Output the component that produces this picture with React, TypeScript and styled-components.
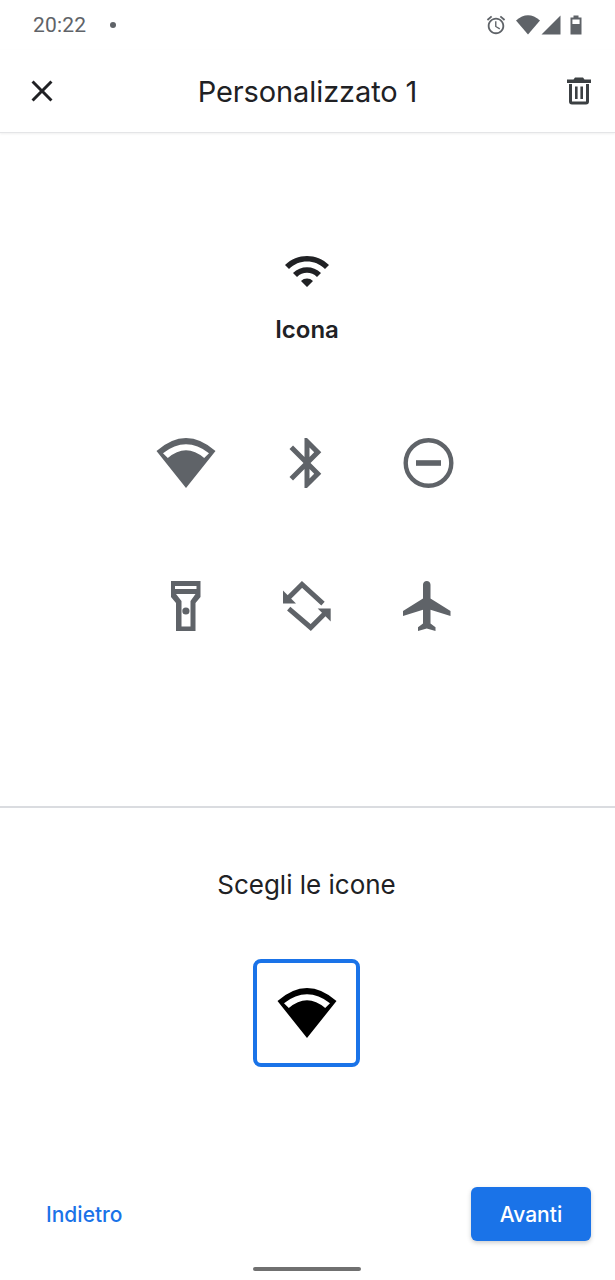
import styled, { createGlobalStyle } from "styled-components"

const GlobalStyle = createGlobalStyle`
  html, body {
    margin: 0;
    padding: 0;
    background: #ffffff;
  }
  * {
    box-sizing: border-box;
  }
`

const GRAY = "#5f6368"
const BLUE = "#1a73e8"

const Page = styled.div`
  width: 615px;
  height: 1280px;
  display: flex;
  flex-direction: column;
  overflow: hidden;
  background: #ffffff;
  font-family: Inter, "Noto Sans", sans-serif;
  color: #202124;
`

const StatusBar = styled.div`
  height: 50px;
  display: flex;
  align-items: center;
  padding: 0 33px;
  color: ${GRAY};
`

const Clock = styled.span`
  font-family: Roboto, sans-serif;
  font-size: 21px;
  letter-spacing: 0.2px;
`

const Dot = styled.span`
  width: 6px;
  height: 6px;
  margin-left: 24px;
  border-radius: 50%;
  background: ${GRAY};
`

const StatusIcons = styled.div`
  margin-left: auto;
  display: flex;
  align-items: center;
`

const StatusIcon = styled.span<{ $gap?: number }>`
  display: flex;
  margin-left: ${(p) => p.$gap ?? 0}px;
`

const Header = styled.header`
  height: 83px;
  flex-shrink: 0;
  display: flex;
  align-items: center;
  padding: 0 24px;
  border-bottom: 1px solid #e4e5e7;
  box-shadow: 0 1px 2px rgba(60, 64, 67, 0.08);
`

const HeaderSlot = styled.div<{ $end?: boolean }>`
  width: 36px;
  display: flex;
  justify-content: ${(p) => (p.$end ? "flex-end" : "flex-start")};
`

const Title = styled.h1`
  flex: 1;
  margin: 0;
  text-align: center;
  font-size: 29px;
  font-weight: 400;
  letter-spacing: -0.1px;
`

const Preview = styled.section`
  height: 675px;
  flex-shrink: 0;
  display: flex;
  flex-direction: column;
  align-items: center;
  padding: 114px 1px 0 0;
  border-bottom: 2px solid #dadce0;
`

const PreviewLabel = styled.div`
  margin-top: 21px;
  font-size: 24px;
  line-height: 28px;
  font-weight: 600;
`

const TileGrid = styled.div`
  margin-top: 89px;
  display: grid;
  grid-template-columns: repeat(3, 121px);
  row-gap: 83px;
`

const Tile = styled.div`
  height: 60px;
  display: flex;
  align-items: center;
  justify-content: center;
  color: ${GRAY};
`

const Picker = styled.section`
  flex: 1;
  display: flex;
  flex-direction: column;
  align-items: center;
  padding: 61px 2px 0 0;
`

const PickerTitle = styled.h2`
  margin: 0;
  font-size: 26px;
  line-height: 32px;
  font-weight: 400;
`

const SelectedIcon = styled.div`
  margin-top: 58px;
  width: 107px;
  height: 108px;
  display: flex;
  align-items: center;
  justify-content: center;
  border: 4px solid ${BLUE};
  border-radius: 8px;
  color: #000000;
`

const Footer = styled.footer`
  height: 54px;
  flex-shrink: 0;
  display: flex;
  align-items: center;
  justify-content: space-between;
  padding: 0 24px 0 46px;
`

const BackButton = styled.button`
  padding: 0;
  border: 0;
  background: none;
  font: inherit;
  font-size: 21px;
  font-weight: 500;
  color: ${BLUE};
`

const NextButton = styled.button`
  width: 120px;
  height: 54px;
  border: 0;
  border-radius: 6px;
  background: ${BLUE};
  box-shadow: 0 2px 4px rgba(60, 64, 67, 0.25);
  font: inherit;
  font-size: 21px;
  font-weight: 500;
  color: #ffffff;
`

const HomeArea = styled.div`
  height: 39px;
  flex-shrink: 0;
  display: flex;
  justify-content: center;
  padding: 26px 1px 0 0;
`

const HomeBar = styled.div`
  width: 108px;
  height: 4px;
  border-radius: 2px;
  background: #707070;
`

const WIFI_PATH =
  "M1 9l2 2c4.97-4.97 13.03-4.97 18 0l2-2C16.93 2.93 7.08 2.93 1 9zm8 8l3 3 3-3c-1.65-1.66-4.34-1.66-6 0zm-4-4l2 2c2.76-2.76 7.24-2.76 10 0l2-2C15.14 9.14 8.87 9.14 5 13z"

function WedgeWifi({ width, height }: { width: number; height: number }) {
  return (
    <svg width={width} height={height} viewBox="0 0 60 50" fill="currentColor">
      <path
        fillRule="evenodd"
        d="M0.5 13 Q30 -13 59.5 13 L30 50 Z M7 15.2 L11.8 20 Q30 4.4 48.2 20 L53 15.2 Q30 -2.6 7 15.2 Z"
      />
    </svg>
  )
}

function AlarmIcon() {
  return (
    <svg width="22" height="22" viewBox="0 0 24 24" fill="currentColor">
      <path d="M22 5.72l-4.6-3.86-1.29 1.53 4.6 3.86L22 5.72zM7.88 3.39L6.6 1.86 2 5.71l1.29 1.53 4.59-3.85zM12.5 8H11v6l4.75 2.85.75-1.23-4-2.37V8zM12 4c-4.97 0-9 4.03-9 9s4.03 9 9 9 9-4.03 9-9-4.03-9-9-9zm0 16c-3.87 0-7-3.13-7-7s3.13-7 7-7 7 3.13 7 7-3.13 7-7 7z" />
    </svg>
  )
}

function StatusWifi() {
  return (
    <svg width="24" height="20" viewBox="0 0 24 20" fill="currentColor">
      <path d="M0 5.5 Q12 -5 24 5.5 L12 19.5 Z" />
    </svg>
  )
}

function SignalIcon() {
  return (
    <svg width="20" height="20" viewBox="0 0 20 20" fill="currentColor">
      <path d="M0.5 19.5 L19.5 0.5 V19.5 Z" />
    </svg>
  )
}

function BatteryIcon() {
  return (
    <svg width="12" height="20" viewBox="0 0 12 20" fill="currentColor">
      <path
        fillRule="evenodd"
        d="M3.5 0.5 H8.5 V2.5 H11.5 V19.5 H0.5 V2.5 H3.5 Z M2.4 4.5 V9 H9.6 V4.5 Z"
      />
    </svg>
  )
}

function CloseIcon() {
  return (
    <svg width="36" height="36" viewBox="0 0 24 24" fill="currentColor">
      <path d="M19 6.41L17.59 5 12 10.59 6.41 5 5 6.41 10.59 12 5 17.59 6.41 19 12 13.41 17.59 19 19 17.59 13.41 12z" />
    </svg>
  )
}

function TrashIcon() {
  return (
    <svg width="24" height="28" viewBox="0 0 24 28" fill="#3c4043">
      <path
        fillRule="evenodd"
        d="M8 0.5 H16 L17.5 2.5 H24 V6 H0 V2.5 H6.5 Z M2 7 H22 V24.5 Q22 27.5 19 27.5 H5 Q2 27.5 2 24.5 Z M5 7 V24.5 H19 V7 Z"
      />
      <rect x="8" y="9.5" width="2.6" height="12.5" />
      <rect x="13.4" y="9.5" width="2.6" height="12.5" />
    </svg>
  )
}

function BluetoothIcon() {
  return (
    <svg width="60" height="60" viewBox="0 0 24 24" fill="currentColor">
      <path d="M17.71 7.71L12 2h-1v7.59L6.41 5 5 6.41 10.59 12 5 17.59 6.41 19 11 14.41V22h1l5.71-5.71-4.3-4.29 4.3-4.29zM13 5.83l1.88 1.88L13 9.59V5.83zm1.88 10.46L13 18.17v-3.76l1.88 1.88z" />
    </svg>
  )
}

function DndIcon() {
  return (
    <svg width="60" height="60" viewBox="0 0 60 60" fill="none" stroke="currentColor">
      <circle cx="30.5" cy="30" r="22.8" strokeWidth="4.4" />
      <path d="M18 30 H43" strokeWidth="5.6" />
    </svg>
  )
}

function FlashlightIcon() {
  return (
    <svg width="30" height="50" viewBox="0 0 30 50" fill="currentColor">
      <path
        fillRule="evenodd"
        d="M0 0 H29.5 V16 L24.5 22 V50 H5 V22 L0 16 Z M4 5 V8 H25.5 V5 Z M5 13 L10.5 20 V45.5 H19.5 V20 L24.5 13 Z"
      />
      <circle cx="14.9" cy="30" r="3.6" />
    </svg>
  )
}

function RotateIcon() {
  return (
    <svg width="48" height="50" viewBox="0 0 48 50" fill="currentColor">
      <path d="M3.3 19 L19 3.5 L40 22.7" fill="none" stroke="currentColor" strokeWidth="5" />
      <path d="M0 9.5 V22.5 H13 Z" />
      <path d="M5.7 27.7 L27.7 46.5 L44.3 30" fill="none" stroke="currentColor" strokeWidth="5" />
      <path d="M47.7 27.5 H34.7 L47.7 40.5 Z" />
    </svg>
  )
}

function PlaneIcon() {
  return (
    <svg width="60" height="60" viewBox="0 0 24 24" fill="currentColor">
      <path d="M21 16v-2l-8-5V3.5c0-.83-.67-1.5-1.5-1.5S10 2.67 10 3.5V9l-8 5v2l8-2.5V19l-2 1.5V22l3.5-1 3.5 1v-1.5L13 19v-5.5l8 2.5z" />
    </svg>
  )
}

export default function App() {
  return (
    <Page>
      <GlobalStyle />
      <StatusBar>
        <Clock>20:22</Clock>
        <Dot />
        <StatusIcons>
          <StatusIcon>
            <AlarmIcon />
          </StatusIcon>
          <StatusIcon $gap={9}>
            <StatusWifi />
          </StatusIcon>
          <StatusIcon $gap={1}>
            <SignalIcon />
          </StatusIcon>
          <StatusIcon $gap={9}>
            <BatteryIcon />
          </StatusIcon>
        </StatusIcons>
      </StatusBar>
      <Header>
        <HeaderSlot>
          <CloseIcon />
        </HeaderSlot>
        <Title>Personalizzato 1</Title>
        <HeaderSlot $end>
          <TrashIcon />
        </HeaderSlot>
      </Header>
      <Preview>
        <svg width="48" height="48" viewBox="0 0 24 24" fill="#202124">
          <path d={WIFI_PATH} />
        </svg>
        <PreviewLabel>Icona</PreviewLabel>
        <TileGrid>
          <Tile>
            <WedgeWifi width={60} height={50} />
          </Tile>
          <Tile>
            <BluetoothIcon />
          </Tile>
          <Tile>
            <DndIcon />
          </Tile>
          <Tile>
            <FlashlightIcon />
          </Tile>
          <Tile>
            <RotateIcon />
          </Tile>
          <Tile>
            <PlaneIcon />
          </Tile>
        </TileGrid>
      </Preview>
      <Picker>
        <PickerTitle>Scegli le icone</PickerTitle>
        <SelectedIcon>
          <WedgeWifi width={60} height={50} />
        </SelectedIcon>
      </Picker>
      <Footer>
        <BackButton>Indietro</BackButton>
        <NextButton>Avanti</NextButton>
      </Footer>
      <HomeArea>
        <HomeBar />
      </HomeArea>
    </Page>
  )
}
